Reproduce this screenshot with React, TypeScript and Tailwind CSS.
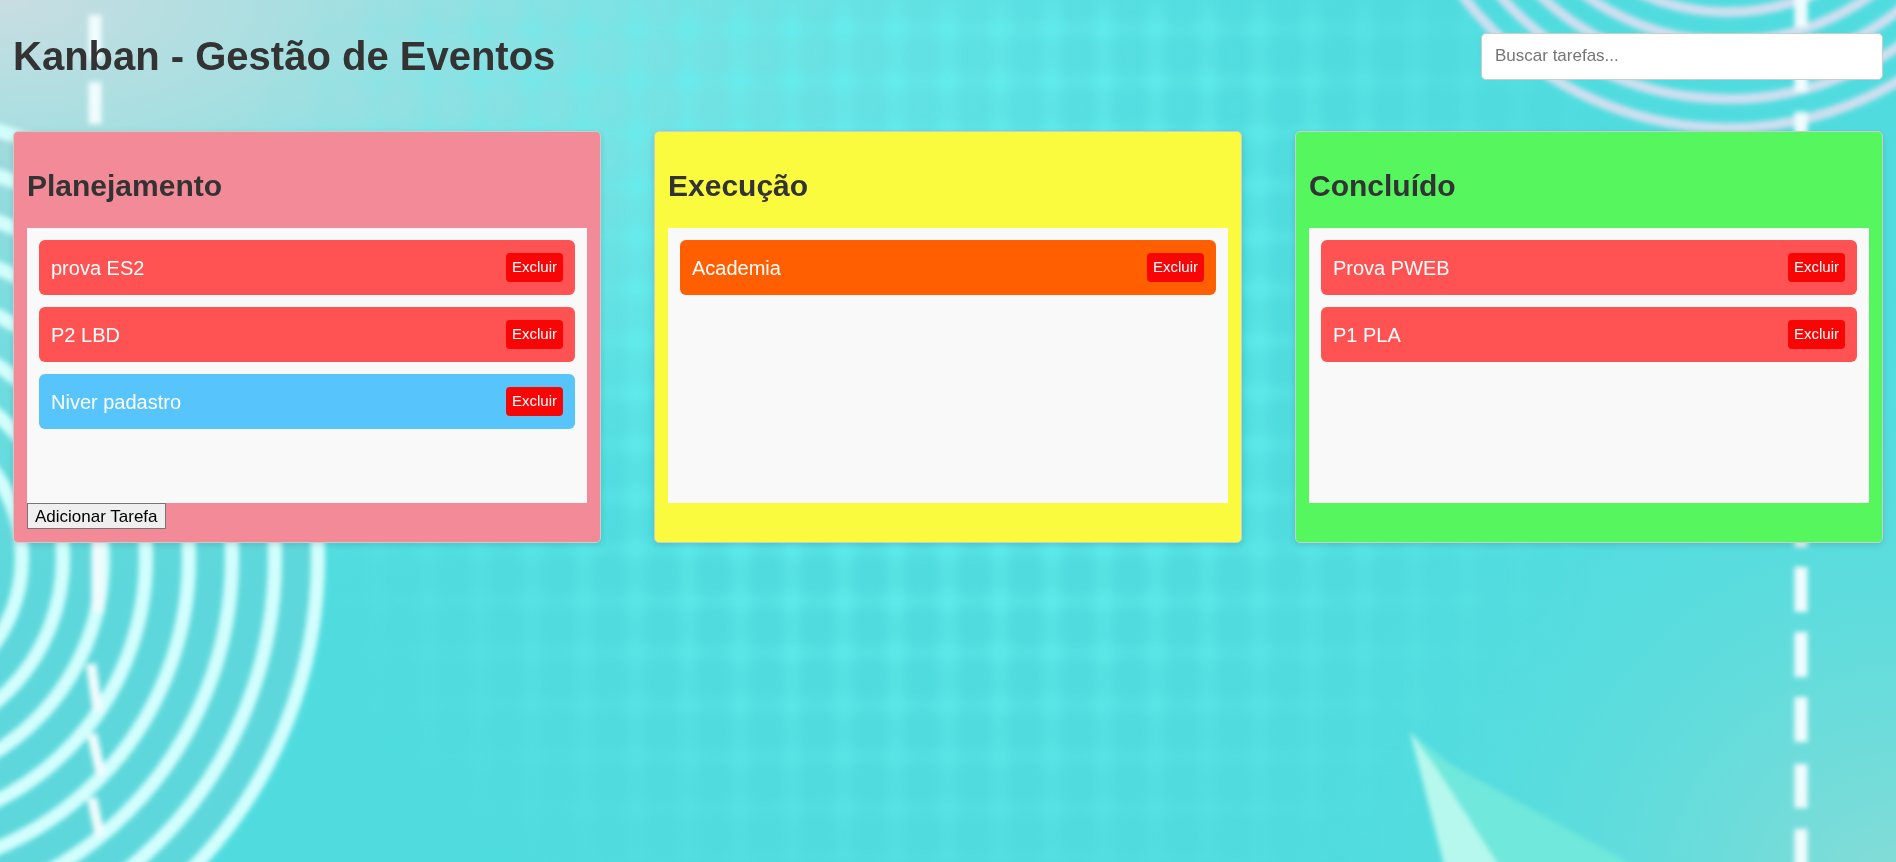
import { useState } from "react";

type Task = { name: string; color: string };
type Column = { title: string; color: string; tasks: Task[]; canAdd?: boolean };

const RED = "bg-[#ff5252]";
const BLUE = "bg-[#57c5fb]";
const ORANGE = "bg-[#ff5f00]";

const initialColumns: Column[] = [
  {
    title: "Planejamento",
    color: "bg-[#f38a98]",
    canAdd: true,
    tasks: [
      { name: "prova ES2", color: RED },
      { name: "P2 LBD", color: RED },
      { name: "Niver padastro", color: BLUE },
    ],
  },
  { title: "Execução", color: "bg-[#fafb3f]", tasks: [{ name: "Academia", color: ORANGE }] },
  {
    title: "Concluído",
    color: "bg-[#56f65f]",
    tasks: [
      { name: "Prova PWEB", color: RED },
      { name: "P1 PLA", color: RED },
    ],
  },
];

const leftRings = [440, 397, 354, 311, 268, 225, 185, 144, 102];
const rightRings = [332, 303, 274, 245, 216];

function Backdrop() {
  return (
    <svg
      className="fixed inset-0 -z-10 h-full w-full"
      viewBox="0 0 1896 862"
      preserveAspectRatio="xMidYMid slice"
      aria-hidden="true"
    >
      <defs>
        <radialGradient id="mist" gradientUnits="userSpaceOnUse" cx="0" cy="0" r="1400" gradientTransform="scale(1 0.45)">
          <stop offset="0" stopColor="#c9dde2" />
          <stop offset="0.22" stopColor="#acdfe1" stopOpacity="0.95" />
          <stop offset="0.45" stopColor="#88e4e5" stopOpacity="0.8" />
          <stop offset="0.7" stopColor="#68e4e6" stopOpacity="0.6" />
          <stop offset="1" stopColor="#50dde0" stopOpacity="0" />
        </radialGradient>
        <radialGradient id="corner" gradientUnits="userSpaceOnUse" cx="1896" cy="900" r="620">
          <stop offset="0" stopColor="#88dcd6" />
          <stop offset="1" stopColor="#50dde0" stopOpacity="0" />
        </radialGradient>
        <radialGradient id="fade" gradientUnits="userSpaceOnUse" cx="940" cy="300" r="720">
          <stop offset="0" stopColor="#fff" />
          <stop offset="0.45" stopColor="#fff" stopOpacity="0.8" />
          <stop offset="1" stopColor="#fff" stopOpacity="0" />
        </radialGradient>
        <radialGradient id="glow">
          <stop offset="0" stopColor="#62f0ef" stopOpacity="0.8" />
          <stop offset="1" stopColor="#62f0ef" stopOpacity="0" />
        </radialGradient>
        <pattern id="grid" width="52" height="52" x="506" y="523" patternUnits="userSpaceOnUse">
          <rect x="17" width="18" height="52" fill="#66eeee" opacity="0.4" />
          <rect y="19" width="52" height="14" fill="#66eeee" opacity="0.35" />
          <circle cx="26" cy="26" r="17" fill="url(#glow)" />
        </pattern>
        <mask id="gridMask">
          <rect width="1896" height="862" fill="url(#fade)" />
        </mask>
        <filter id="soft" x="-5%" y="-5%" width="110%" height="110%">
          <feGaussianBlur stdDeviation="2.5" />
        </filter>
        <filter id="softer" x="-5%" y="-5%" width="110%" height="110%">
          <feGaussianBlur stdDeviation="5" />
        </filter>
      </defs>
      <rect width="1896" height="862" fill="#50dcdf" />
      <rect width="1896" height="862" fill="url(#mist)" />
      <rect width="1896" height="862" fill="url(#corner)" />
      <g mask="url(#gridMask)">
        <rect width="1896" height="862" fill="url(#grid)" filter="url(#softer)" />
      </g>
      <g filter="url(#soft)" fill="none">
        <ellipse cx="-122" cy="558" rx="436" ry="440" fill="#8cc8cc" opacity="0.22" />
        <g stroke="#d2fefd" strokeWidth="14">
          {leftRings.map((r) => (
            <ellipse key={r} cx="-122" cy="558" rx={r} ry={r * 1.01} />
          ))}
        </g>
        <g stroke="#cfdff0" strokeWidth="10">
          {rightRings.map((r) => (
            <circle key={r} cx="1728" cy="-204" r={r} />
          ))}
        </g>
        <g stroke="#f0fcfd" strokeWidth="13">
          <path d="M95 15V60M95 82V124M98 520V612" />
          <path d="M91 664L98 712M92 734L101 775M92 798L100 836" strokeWidth="10" />
          <path d="M1801 -18V27M1801 47V92M1801 112V157M1801 502V547M1801 567V612M1801 632V677M1801 697V742M1801 764V808M1801 829V874" />
        </g>
        <path d="M1410 732L1450 764L1660 880H1480Z" fill="#6fe8dc" />
        <path d="M1410 732L1436 768L1508 880H1448Z" fill="#b6f8ee" />
      </g>
    </svg>
  );
}

export default function App() {
  const [columns, setColumns] = useState(initialColumns);
  const [query, setQuery] = useState("");

  const removeTask = (column: number, task: number) =>
    setColumns((all) =>
      all.map((c, i) => (i === column ? { ...c, tasks: c.tasks.filter((_, j) => j !== task) } : c)),
    );

  const addTask = (column: number) =>
    setColumns((all) =>
      all.map((c, i) => (i === column ? { ...c, tasks: [...c.tasks, { name: "Nova tarefa", color: BLUE }] } : c)),
    );

  return (
    <div className="relative isolate min-h-screen p-[13px] font-['Liberation_Sans',Arial,sans-serif] text-[#333]">
      <Backdrop />
      <header className="flex h-[86px] items-center justify-between">
        <h1 className="text-[40px] leading-[46px] font-bold">Kanban - Gestão de Eventos</h1>
        <input
          type="search"
          aria-label="Buscar tarefas"
          placeholder="Buscar tarefas..."
          value={query}
          onChange={(e) => setQuery(e.target.value)}
          className="h-[47px] w-[402px] rounded-[5px] border border-[#ccc] bg-white px-[13px] text-[17px] placeholder:text-[#757575]"
        />
      </header>
      <main className="mt-8 grid grid-cols-3 items-stretch gap-[53px]">
        {columns.map((column, ci) => (
          <section
            key={column.title}
            className={`rounded-[5px] border border-[#ccc] p-[13px] shadow-[0_2px_6px_rgba(0,0,0,0.12)] ${column.color}`}
          >
            <h2 className="mt-[23px] mb-[25px] text-[30px] leading-[35px] font-bold">{column.title}</h2>
            <ul className="flex min-h-[275px] flex-col gap-3 bg-[#f9f9f9] p-3">
              {column.tasks.map((task, ti) =>
                task.name.toLowerCase().includes(query.toLowerCase()) ? (
                  <li
                    key={ti}
                    className={`flex h-[55px] items-center justify-between rounded-[6px] px-3 text-[20px] text-white ${task.color}`}
                  >
                    <span>{task.name}</span>
                    <button
                      type="button"
                      onClick={() => removeTask(ci, ti)}
                      className="h-[29px] rounded-[4px] bg-[#f80505] px-[6px] text-[15px]"
                    >
                      Excluir
                    </button>
                  </li>
                ) : null,
              )}
            </ul>
            {column.canAdd && (
              <button
                type="button"
                onClick={() => addTask(ci)}
                className="block h-[26px] border border-[#767676] bg-[#efefef] px-[7px] text-[17px] leading-none text-black"
              >
                Adicionar Tarefa
              </button>
            )}
          </section>
        ))}
      </main>
    </div>
  );
}
